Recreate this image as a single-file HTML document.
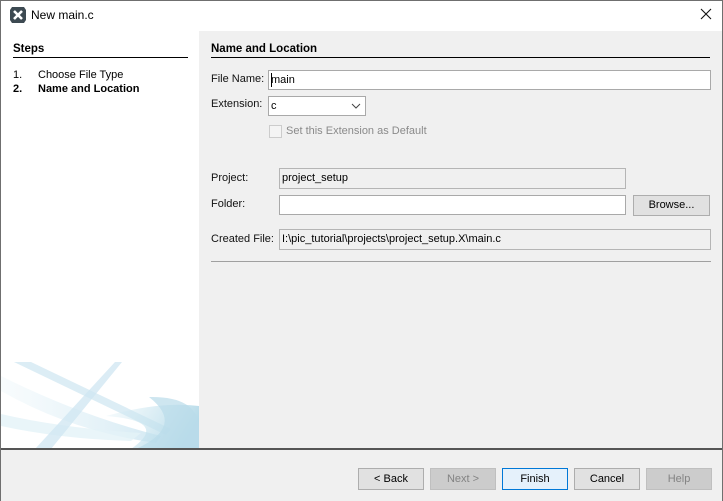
<!DOCTYPE html>
<html><head><style>
*{margin:0;padding:0;box-sizing:border-box}
body{width:723px;height:501px;overflow:hidden;background:#f0f0f0;font-family:"Liberation Sans",sans-serif;font-size:11px;color:#000;position:relative}
.a{position:absolute}
.win{left:0;top:0;width:723px;height:501px;border:1px solid #6f6f6f;border-bottom:none}
.title{left:1px;top:1px;width:721px;height:30px;background:#fff}
.left{left:1px;top:31px;width:198px;height:418px;background:#fff;overflow:hidden}
.lbl{font-size:11px;color:#111}
.box{background:#fff;border:1px solid #a9a9a9;height:21px;padding:3px 2px;font-size:11px}
.ro{background:#f0f0f0;border:1px solid #b5b5b5}
.btn{height:22px;width:66px;border:1px solid #adadad;background:#e1e1e1;text-align:center;line-height:20px;font-size:11px;top:468px}
.dis{background:#cccccc;border-color:#bfbfbf;color:#838383}
</style></head><body>
<div class="a win"></div>
<div class="a title"></div>
<svg class="a" style="left:9px;top:6px" width="18" height="18" viewBox="0 0 18 18"><path d="M3 1h12l2 3v10l-2 3H3l-2-3V4z" fill="#3d4a52"/><path d="M5 5l8 8M13 5l-8 8" stroke="#fff" stroke-width="2.6"/></svg>
<div class="a" style="left:31px;top:8px;font-size:12px">New main.c</div>
<svg class="a" style="left:700px;top:8px" width="12" height="12"><path d="M1 1l10 10M11 1L1 11" stroke="#111" stroke-width="1.1"/></svg>
<div class="a left">
<svg width="198" height="418" viewBox="0 0 198 418"><defs>
<linearGradient id="g1" x1="0" y1="0" x2="1" y2="0.3"><stop offset="0" stop-color="#d6ecf4" stop-opacity="0.2"/><stop offset="1" stop-color="#b7dbe9"/></linearGradient>
<linearGradient id="g3" x1="0" y1="0" x2="1" y2="0"><stop offset="0" stop-color="#e8f4f9" stop-opacity="0.3"/><stop offset="1" stop-color="#d3e9f3"/></linearGradient></defs>
<path d="M13 331 L30 331 L170 398 L165 404 Z" fill="#d3e9f3" opacity="0.8"/>
<path d="M0 345 Q80 385 160 405 L155 412 Q70 400 0 360 Z" fill="url(#g3)"/>
<path d="M0 383 Q60 397 140 402 L130 410 Q60 408 0 395Z" fill="#e4f2f7" opacity="0.8"/>
<path d="M114 331 L121 331 L50 418 L34 418 Z" fill="#cfe6f1" opacity="0.75"/>
<path d="M105 385 Q160 370 198 375 L198 418 L130 418 Q170 390 105 385Z" fill="url(#g1)"/>
<path d="M148 366 Q195 365 198 395 L198 418 L135 418 Q185 395 148 366Z" fill="#b9dbe9" opacity="0.7"/>
</svg></div>
<div class="a" style="left:13px;top:43px;font-weight:bold;font-size:11.5px">Steps</div>
<div class="a" style="left:13px;top:57px;width:175px;height:1px;background:#000"></div>
<div class="a" style="left:13px;top:69px">1.</div><div class="a" style="left:38px;top:69px">Choose File Type</div>
<div class="a" style="left:13px;top:83px;font-weight:bold">2.</div><div class="a" style="left:38px;top:83px;font-weight:bold">Name and Location</div>

<div class="a" style="left:211px;top:43px;font-weight:bold;font-size:11.5px">Name and Location</div>
<div class="a" style="left:211px;top:57px;width:499px;height:1px;background:#000"></div>
<div class="a lbl" style="left:211px;top:73px">File Name:</div>
<div class="a box" style="left:268px;top:70px;width:443px;height:20px;padding-top:3px">main</div>
<div class="a" style="left:271px;top:73px;width:1px;height:14px;background:#000"></div>
<div class="a lbl" style="left:211px;top:98px">Extension:</div>
<div class="a box" style="left:268px;top:96px;width:98px;height:20px">c</div>
<svg class="a" style="left:351px;top:103px" width="10" height="6"><path d="M1 1l4 4 4-4" stroke="#444" fill="none"/></svg>
<div class="a" style="left:269px;top:125px;width:13px;height:13px;border:1px solid #ccc;background:#f4f4f4"></div>
<div class="a" style="left:286px;top:125px;color:#8a8a8a">Set this Extension as Default</div>
<div class="a lbl" style="left:211px;top:172px">Project:</div>
<div class="a box ro" style="left:279px;top:168px;width:347px">project_setup</div>
<div class="a lbl" style="left:211px;top:198px">Folder:</div>
<div class="a box" style="left:279px;top:195px;width:347px;height:20px"></div>
<div class="a btn" style="left:633px;top:195px;width:77px;height:21px;line-height:19px">Browse...</div>
<div class="a lbl" style="left:211px;top:233px">Created File:</div>
<div class="a box ro" style="left:279px;top:229px;width:432px">I:\pic_tutorial\projects\project_setup.X\main.c</div>
<div class="a" style="left:211px;top:261px;width:500px;height:1px;background:#a0a0a0"></div>

<div class="a" style="left:1px;top:448px;width:721px;height:2px;background:#555"></div>
<div class="a btn" style="left:358px">&lt; Back</div>
<div class="a btn dis" style="left:430px">Next &gt;</div>
<div class="a btn" style="left:502px;border-color:#0078d7;background:#e5f1fb">Finish</div>
<div class="a btn" style="left:574px">Cancel</div>
<div class="a btn dis" style="left:646px">Help</div>
</body></html>
